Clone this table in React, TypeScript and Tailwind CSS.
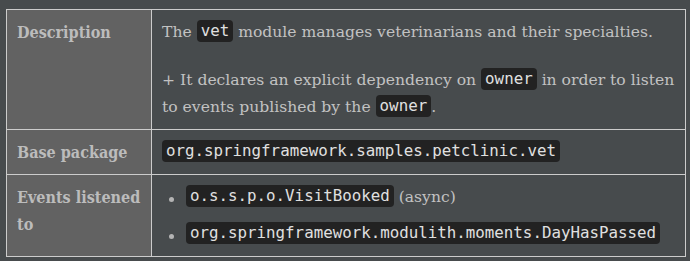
import React from 'react';

const serif = "font-['DejaVu_Serif',serif]";
const mono = "font-['DejaVu_Sans_Mono',monospace]";

function Code({ children }: { children: React.ReactNode }) {
  return (
    <code className={`${mono} inline-block rounded-[4px] bg-[#222222] px-[4px] text-[15.8px] leading-[22px] text-[#e0e0e0] align-[1px]`}>
      {children}
    </code>
  );
}

function Label({ children }: { children: React.ReactNode }) {
  return (
    <td className="w-[145px] border border-[#cccccc] bg-[#626262] px-[10px] pt-[9px] pb-[8px] align-top font-['DejaVu_Serif_Condensed','DejaVu_Serif',serif] text-[16px] font-bold text-[#bcbcbc] [font-stretch:condensed]">
      {children}
    </td>
  );
}

function Cell({ children, className = '' }: { children: React.ReactNode; className?: string }) {
  return (
    <td className={`border border-[#cccccc] px-[10px] pt-[9px] pb-[8px] align-top text-[#c2c2c2] ${className}`}>
      {children}
    </td>
  );
}

function Item({ children }: { children: React.ReactNode }) {
  return (
    <li className="flex items-center">
      <span className="ml-[7px] mr-[12px] mt-[4px] h-[5px] w-[5px] shrink-0 rounded-full bg-[#b4b4b4]" />
      <span>{children}</span>
    </li>
  );
}

export default function App() {
  return (
    <div className={`${serif} h-[261px] w-[690px] bg-[#474b4d] pl-[6px] pt-[9px] text-[15.6px] leading-[27px]`}>
      <table className="w-[680px] border-collapse">
        <tbody>
          <tr>
            <Label>Description</Label>
            <Cell>
              <p>
                The <Code>vet</Code> module manages veterinarians and their specialties.
              </p>
              <p className="mt-[21px]">
                + It declares an explicit dependency on <Code>owner</Code> in order to listen to events published by the{' '}
                <Code>owner</Code>.
              </p>
            </Cell>
          </tr>
          <tr>
            <Label>Base package</Label>
            <Cell className="pt-[8px]">
              <p>
                <Code>org.springframework.samples.petclinic.vet</Code>
              </p>
            </Cell>
          </tr>
          <tr>
            <Label>Events listened to</Label>
            <Cell className="pb-[7px]">
              <ul className="flex flex-col gap-[10px]">
                <Item>
                  <Code>o.s.s.p.o.VisitBooked</Code> (async)
                </Item>
                <Item>
                  <Code>org.springframework.modulith.moments.DayHasPassed</Code>
                </Item>
              </ul>
            </Cell>
          </tr>
        </tbody>
      </table>
    </div>
  );
}
